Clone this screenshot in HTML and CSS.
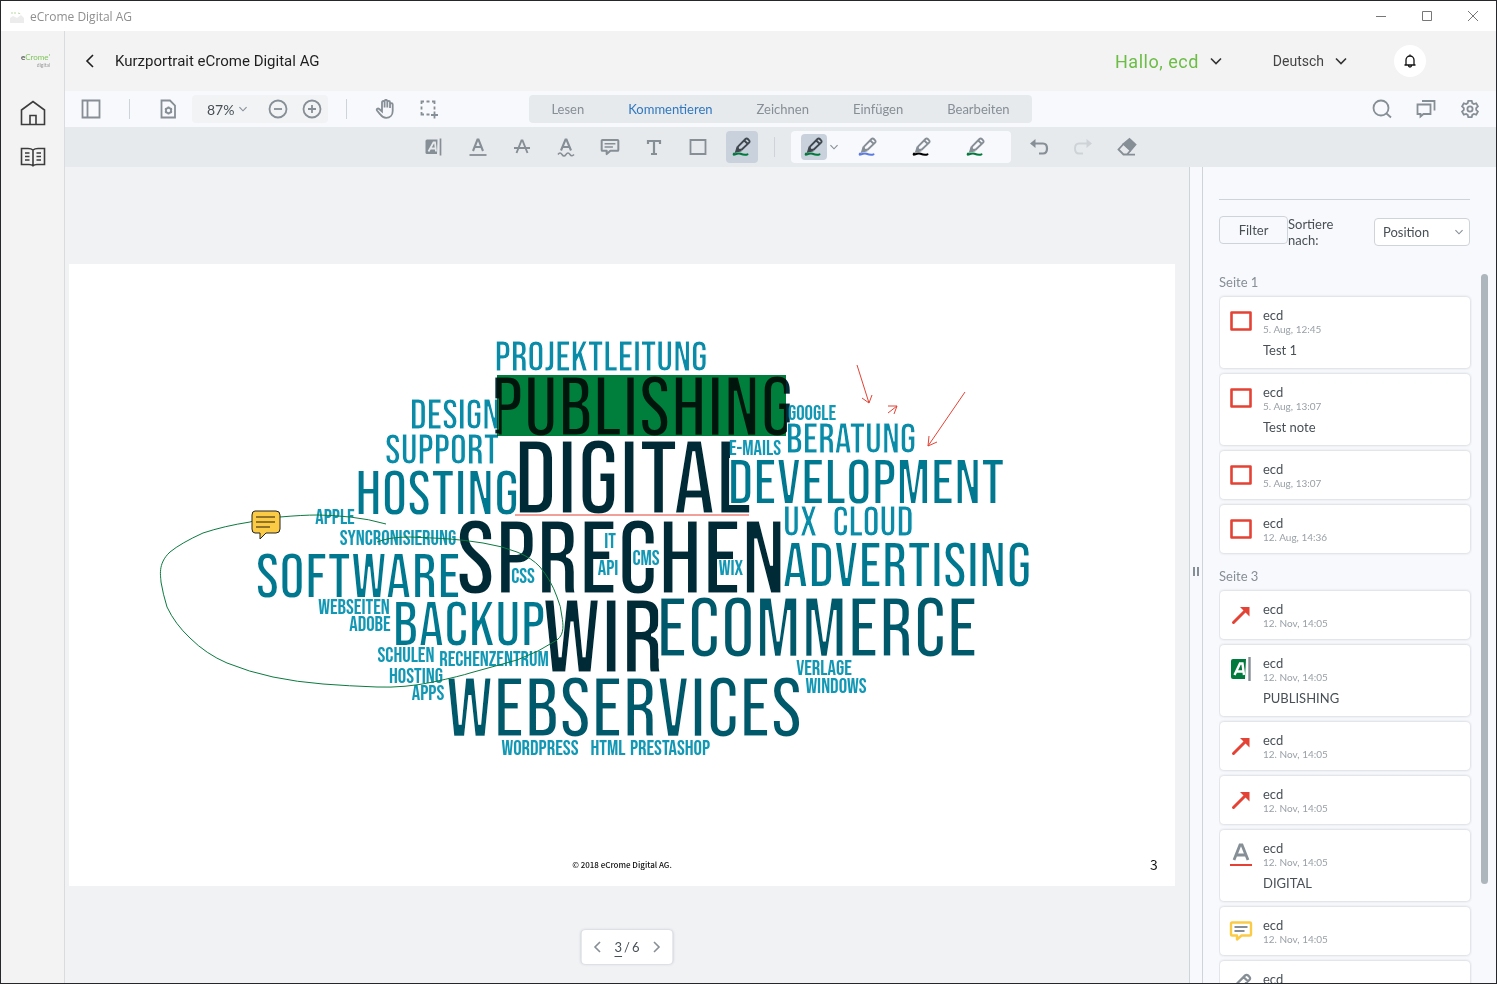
FILE: index.html
```html
<!DOCTYPE html>
<html lang="de">
<head>
    <meta charset="UTF-8">
    <meta name="viewport" content="width=device-width, initial-scale=1.0">
    <title>eCrome Digital AG</title>
    <link rel="stylesheet" href="styles.css">
</head>
<body>
    <!-- Shared icons -->
    <svg class="sprite" aria-hidden="true">
        <symbol id="i-chevron" viewBox="0 0 14 14"><path d="M2 4.500l5 5 5-5" fill="none" stroke="currentColor" stroke-width="1.600"/></symbol>
        <symbol id="i-pencil" viewBox="0 0 20 20">
            <path d="M5 13.500l1.200-4.200L13.500 2a1.600 1.600 0 0 1 2.300 0l1.300 1.300a1.600 1.600 0 0 1 0 2.300L9.800 12.500z M12.300 3.500l3.400 3.400" fill="none" stroke="currentColor" stroke-width="1.900" stroke-linejoin="round"/>
            <path d="M4 14.800l1.200-3.800 2.800 2.700z" fill="currentColor"/>
            <path class="stroke-ink" d="M2 16.600c-.6.800-.4 1.200.3 1 2.200-.8 4.200-1.600 6.200-.8s4.500 1.600 7 .6" fill="none" stroke-width="2" stroke-linecap="round"/>
        </symbol>
        <symbol id="i-rect" viewBox="0 0 24 24"><path d="M2.500 3.500h19v17h-19z" fill="none" stroke="currentColor" stroke-width="2.600" stroke-linejoin="round"/></symbol>
        <symbol id="i-arrow" viewBox="0 0 24 24"><path d="M4.500 19.500L17 7" fill="none" stroke="currentColor" stroke-width="3" stroke-linecap="round"/><path d="M11 4h9.500v9.500z" fill="currentColor"/></symbol>
        <symbol id="i-note" viewBox="0 0 24 24">
            <path d="M3 3.500h18a1 1 0 0 1 1 1v11a1 1 0 0 1-1 1h-8.500L8 20.500v-4H3a1 1 0 0 1-1-1v-11a1 1 0 0 1 1-1z" fill="none" stroke="currentColor" stroke-width="2.400" stroke-linejoin="round"/>
            <path class="note-lines" d="M5.500 8h13M5.500 12h10" fill="none" stroke-width="1.800"/>
        </symbol>
    </svg>

    <div class="window">
        <header class="titlebar">
            <svg class="app-icon" viewBox="0 0 16 14"><path d="M1 9l3-2 4 2 4-3 3 3v5H1z" fill="#ececec"/><path d="M2 4h5M9 4l3 1" stroke="#b8d9a2" stroke-dasharray="2 1"/></svg>
            <span class="window-title">eCrome Digital AG</span>
            <div class="window-buttons">
                <button aria-label="Minimieren"><svg viewBox="0 0 12 12"><path d="M1 6.500h10"/></svg></button>
                <button aria-label="Maximieren"><svg viewBox="0 0 12 12"><path d="M1.500 1.500h9v9h-9z"/></svg></button>
                <button aria-label="Schließen"><svg viewBox="0 0 12 12"><path d="M1 1l10 10M11 1L1 11"/></svg></button>
            </div>
        </header>

        <div class="app">
            <nav class="sidebar">
                <a href="#" class="logo" aria-label="eCrome digital"><span class="logo-name"><b>e</b>Crome'</span><span class="logo-sub">digital</span></a>
                <a href="#" class="side-link" aria-label="Start">
                    <svg viewBox="0 0 26 26"><path d="M1.500 10L13 1.500 24.500 10v14.500h-23zM10 24v-8.500h6V24"/></svg>
                </a>
                <a href="#" class="side-link" aria-label="Bibliothek">
                    <svg viewBox="0 0 26 26"><path d="M13 6c-1.500-1.300-3-1.500-5-1.500H1.500v16H9c2 0 3 .2 4 1.300 1-1.100 2-1.300 4-1.300h7.500v-16H18c-2 0-3.500.2-5 1.500zM13 6v15.500M5 9h4.500M5 12.500h4.500M5 16h4.500M16.500 9H21M16.500 12.500H21M16.500 16H21"/></svg>
                </a>
            </nav>

            <div class="main">
                <header class="header">
                    <button class="back" aria-label="Zurück"><svg viewBox="0 0 14 14"><path d="M10 1L4 7l6 6" fill="none" stroke="currentColor" stroke-width="1.600"/></svg></button>
                    <h1>Kurzportrait eCrome Digital AG</h1>
                    <button class="user-menu">Hallo, ecd <svg class="chevron"><use href="#i-chevron"/></svg></button>
                    <button class="lang-menu">Deutsch <svg class="chevron"><use href="#i-chevron"/></svg></button>
                    <button class="bell" aria-label="Benachrichtigungen">
                        <svg viewBox="0 0 16 16"><path d="M2.500 12h11M4 12V7a4 4 0 0 1 8 0v5M6.500 12.500a1.500 1.500 0 0 0 3 0M8 1.500V3" fill="none" stroke="currentColor" stroke-width="1.300"/></svg>
                    </button>
                </header>

                <div class="toolbar">
                    <div class="tools-left">
                        <button class="tool" aria-label="Seitenleiste"><svg viewBox="0 0 20 20"><path d="M1.500 1.500h17v17h-17zM6.500 1.500v17"/></svg></button>
                        <span class="divider"></span>
                        <button class="tool" aria-label="Ansicht"><svg viewBox="0 0 20 20"><path d="M3.500 1.500h8.500l5 5v12H3.500z"/><circle cx="10.500" cy="11.500" r="2.600"/><path d="M10.500 7.500v1.500M10.500 14v1.500M7 9.500l1.300.8M12.700 12.700l1.300.8M14 9.500l-1.300.8M8.300 12.700l-1.300.8"/></svg></button>
                        <div class="zoom">
                            <button class="zoom-value">87% <svg class="chevron-small"><use href="#i-chevron"/></svg></button>
                            <button class="tool" aria-label="Verkleinern"><svg viewBox="0 0 20 20"><circle cx="10" cy="10" r="8.500"/><path d="M6 10h8"/></svg></button>
                            <button class="tool" aria-label="Vergrößern"><svg viewBox="0 0 20 20"><circle cx="10" cy="10" r="8.500"/><path d="M6 10h8M10 6v8"/></svg></button>
                        </div>
                        <span class="divider"></span>
                        <button class="tool" aria-label="Verschieben"><svg viewBox="0 0 20 20"><path d="M7 10V3.300a1.300 1.300 0 0 1 2.600 0V8.500 2.200a1.300 1.300 0 0 1 2.700 0V8.500 3.200a1.300 1.300 0 0 1 2.700 0V9 5.500a1.300 1.300 0 0 1 2.700 0V12c0 4-2.700 6.800-6.500 6.800-3 0-4.500-1.300-6-3.500L2 11.500c-.8-1.300.8-2.700 2.200-1.500L7 12.500z"/></svg></button>
                        <button class="tool marquee" aria-label="Auswahl"><svg viewBox="0 0 20 20"><path d="M2.500 5V2.500H5M7.500 2.500h3M13 2.500h2.500V5M15.500 7.500v3M2.500 7.500v3M2.500 13v2.500H5M7.500 15.500h3M15.500 12.500v7M12 16h7"/></svg></button>
                    </div>
                    <nav class="tabs">
                        <button>Lesen</button>
                        <button class="active">Kommentieren</button>
                        <button>Zeichnen</button>
                        <button>Einfügen</button>
                        <button>Bearbeiten</button>
                    </nav>
                    <div class="tools-right">
                        <button class="tool" aria-label="Suchen"><svg viewBox="0 0 20 20"><circle cx="9" cy="9" r="7.500"/><path d="M14.500 14.500l4.500 4"/></svg></button>
                        <button class="tool" aria-label="Kommentare"><svg viewBox="0 0 20 20"><path d="M1.500 5.500h13v9.500H7.500L4.500 17.500V15h-3zM6 2h12.500v9.500"/></svg></button>
                        <button class="tool" aria-label="Einstellungen"><svg viewBox="0 0 20 20"><circle cx="10" cy="10" r="2.600"/><path d="M8.300 1.800h3.400l.6 2.300 1.500.9 2.400-.7 1.700 3-1.700 1.700v2l1.700 1.700-1.700 3-2.400-.7-1.500.9-.6 2.300H8.300l-.6-2.300-1.500-.9-2.400.7-1.700-3L3.800 11V9L2.100 7.300l1.700-3 2.400.7 1.500-.9z"/></svg></button>
                    </div>
                </div>

                <div class="toolbar-sub">
                    <div class="annotate">
                        <button class="sub" aria-label="Hervorheben"><svg viewBox="0 0 20 20"><path d="M3 2.500h10.500L13 17H3q-1.500 0-1.500-1.500V4Q1.500 2.500 3 2.500z" fill="currentColor" stroke="none"/><path class="knockout" d="M4.500 14.500L9.500 5.500h1.500l1 9M6.500 11.500h5"/><path d="M16.500 1.500v17" stroke-width="1.700"/></svg></button>
                        <button class="sub" aria-label="Unterstreichen"><svg viewBox="0 0 20 20"><path d="M5 14L9.500 2.500h1L15 14M6.800 10h6.400" stroke-width="2.100"/><path d="M1.500 18h17"/></svg></button>
                        <button class="sub" aria-label="Durchstreichen"><svg viewBox="0 0 20 20"><path d="M4.500 16L9.500 3.500h1l5 12.500M2 11h16" stroke-width="1.900"/></svg></button>
                        <button class="sub" aria-label="Wellenlinie"><svg viewBox="0 0 20 20"><path d="M5 13.500l4.500-11h1l4.500 11M6.800 10h6.400" stroke-width="2.100"/><path d="M2 17.500c1.300-2 2.700-2 4 0s2.700 2 4 0 2.700-2 4 0 2.700 1.500 4 0" stroke-width="1.500"/></svg></button>
                        <button class="sub" aria-label="Notiz"><svg><use href="#i-note"/></svg></button>
                        <button class="sub" aria-label="Text"><svg viewBox="0 0 20 20"><path d="M4 7V4h12v3M10 4v13M7 17h6" stroke-width="2.200"/></svg></button>
                        <button class="sub" aria-label="Rechteck"><svg viewBox="0 0 20 20"><path d="M2.500 3h15v14h-15z"/></svg></button>
                        <button class="sub selected ink-green" aria-label="Freihand"><svg><use href="#i-pencil"/></svg></button>
                    </div>
                    <span class="divider"></span>
                    <div class="presets">
                        <button class="preset selected ink-green" aria-label="Stift 1"><svg><use href="#i-pencil"/></svg></button>
                        <button class="preset-more" aria-label="Mehr"><svg class="chevron-small"><use href="#i-chevron"/></svg></button>
                        <button class="preset ink-blue" aria-label="Stift 2"><svg><use href="#i-pencil"/></svg></button>
                        <button class="preset ink-black" aria-label="Stift 3"><svg><use href="#i-pencil"/></svg></button>
                        <button class="preset ink-green" aria-label="Stift 4"><svg><use href="#i-pencil"/></svg></button>
                    </div>
                    <div class="history">
                        <button class="sub" aria-label="Rückgängig"><svg viewBox="0 0 20 20"><path d="M4 6.500h10q4 0 4 5t-4 5h-4" stroke-width="2.200"/><path d="M1 6.500L6.500 2v9z" fill="currentColor" stroke="none"/></svg></button>
                        <button class="sub" disabled aria-label="Wiederholen"><svg viewBox="0 0 20 20"><path d="M16 6.500H6q-4 0-4 5t4 5h4" stroke-width="2"/><path d="M19 6.500L13.500 2v9z" fill="currentColor" stroke="none"/></svg></button>
                        <button class="sub" aria-label="Radierer"><svg viewBox="0 0 20 20"><path d="M6.500 7l6-5 6 5.500-5 6z" fill="currentColor"/><path d="M6.500 7L1.500 12.500 6.500 17.500h3.500l3.500-4M8 17.600h10"/></svg></button>
                    </div>
                </div>

                <div class="workspace">
                    <main class="viewer">
                        <div class="slide">
                            <svg viewBox="0 0 1106 622" role="img" aria-label="Wortwolke">
                                <g class="cloud">
                                    <g class="xl">
                                        <text x="564" y="250">DIGITAL</text>
                                        <text x="552" y="330">SPRECHEN</text>
                                        <text x="534" y="409">WIR</text>
                                    </g>
                                    <g class="l">
                                        <text x="573" y="172" class="darkest">PUBLISHING</text>
                                        <text x="748" y="393">ECOMMERCE</text>
                                        <text x="555" y="473">WEBSERVICES</text>
                                    </g>
                                    <g class="m">
                                        <text x="368" y="251">HOSTING</text>
                                        <text x="289" y="334">SOFTWARE</text>
                                        <text x="400" y="382">BACKUP</text>
                                        <text x="797" y="240">DEVELOPMENT</text>
                                        <text x="838" y="323">ADVERTISING</text>
                                    </g>
                                    <g class="s">
                                        <text x="532" y="107">PROJEKTLEITUNG</text>
                                        <text x="386" y="165">DESIGN</text>
                                        <text x="373" y="200">SUPPORT</text>
                                        <text x="782" y="189">BERATUNG</text>
                                        <text x="731" y="272">UX</text>
                                        <text x="804" y="272">CLOUD</text>
                                    </g>
                                    <g class="xs">
                                        <text x="743" y="156">GOOGLE</text>
                                        <text x="686" y="191">E-MAILS</text>
                                        <text x="266" y="260">APPLE</text>
                                        <text x="329" y="281">SYNCRONISIERUNG</text>
                                        <text x="454" y="319">CSS</text>
                                        <text x="541" y="284">IT</text>
                                        <text x="539" y="311">API</text>
                                        <text x="577" y="301">CMS</text>
                                        <text x="662" y="311">WIX</text>
                                        <text x="285" y="350">WEBSEITEN</text>
                                        <text x="301" y="367">ADOBE</text>
                                        <text x="337" y="398">SCHULEN</text>
                                        <text x="425" y="402">RECHENZENTRUM</text>
                                        <text x="347" y="419">HOSTING</text>
                                        <text x="359" y="436">APPS</text>
                                        <text x="755" y="411">VERLAGE</text>
                                        <text x="767" y="429">WINDOWS</text>
                                        <text x="471" y="491">WORDPRESS</text>
                                        <text x="539" y="491">HTML</text>
                                        <text x="601" y="491">PRESTASHOP</text>
                                    </g>
                                </g>
                                <!-- Annotations -->
                                <path class="highlight" d="M428 111h289v61H428z"/>
                                <path class="red-line" d="M446 251h234"/>
                                <path class="red-line" d="M788 101l12 38M793 134l7 5 3-8M819 149l9-7M819 142l9 0-3 8M896 128l-37 54M860 172l-1 10 9-4"/>
                                <path class="freehand" d="M317 260Q300 255 281 253T248 251T211 253T181 258Q155 262 134 269Q112 279 101 288C88 300 92 313 92 318Q94 330 98 343Q106 360 121 374Q137 390 158 399Q180 408 204 413T254 420T308 423T364 418T401 409L448 396Q470 388 488 376C496 370 494 359 493 353Q492 342 488 333Q482 316 471 303Q463 294 448 288T414 279T381 275T341 273Q320 273 308 278"/>
                                <path class="sticky" d="M186 247h21q4 0 4 4v14q0 4-4 4h-10l-6 6v-6h-5q-3 0-3-4v-14q0-4 3-4z"/>
                                <path class="sticky-lines" d="M187 253h19M187 258h19M187 263h14"/>
                                <text class="copyright" x="553" y="604">© 2018 eCrome Digital AG.</text>
                                <text class="page-no" x="1085" y="606">3</text>
                            </svg>
                        </div>
                        <div class="pager">
                            <button aria-label="Vorherige Seite"><svg class="prev"><use href="#i-chevron"/></svg></button>
                            <span class="pages"><u>3</u><span>/</span><span>6</span></span>
                            <button aria-label="Nächste Seite"><svg class="next"><use href="#i-chevron"/></svg></button>
                        </div>
                    </main>
                    <div class="resizer"><span></span></div>
                    <aside class="panel">
                        <div class="filter-row">
                            <button class="filter">Filter</button>
                            <label for="sort">Sortiere nach:</label>
                            <div class="select-wrap">
                                <select id="sort"><option>Position</option></select>
                                <svg class="chevron-small"><use href="#i-chevron"/></svg>
                            </div>
                        </div>
                        <div class="notes">
                            <div class="note-list">
                                <h2>Seite 1</h2>
                                <article class="card"><svg class="red"><use href="#i-rect"/></svg><div><h3>ecd</h3><time>5. Aug, 12:45</time><p>Test 1</p></div></article>
                                <article class="card"><svg class="red"><use href="#i-rect"/></svg><div><h3>ecd</h3><time>5. Aug, 13:07</time><p>Test note</p></div></article>
                                <article class="card"><svg class="red"><use href="#i-rect"/></svg><div><h3>ecd</h3><time>5. Aug, 13:07</time></div></article>
                                <article class="card"><svg class="red"><use href="#i-rect"/></svg><div><h3>ecd</h3><time>12. Aug, 14:36</time></div></article>
                                <h2>Seite 3</h2>
                                <article class="card"><svg class="red"><use href="#i-arrow"/></svg><div><h3>ecd</h3><time>12. Nov, 14:05</time></div></article>
                                <article class="card"><svg viewBox="0 0 24 24"><path d="M4 2h13l-1 20H4q-2 0-2-2V4q0-2 2-2z" fill="#007a3d"/><path d="M5.500 18L11 6.500h2.500L15 18M7.500 14.500h7" fill="none" stroke="#fff" stroke-width="2.400"/><path d="M20.500 0v24" stroke="#868e96" stroke-width="2.400"/></svg><div><h3>ecd</h3><time>12. Nov, 14:05</time><p>PUBLISHING</p></div></article>
                                <article class="card"><svg class="red"><use href="#i-arrow"/></svg><div><h3>ecd</h3><time>12. Nov, 14:05</time></div></article>
                                <article class="card"><svg class="red"><use href="#i-arrow"/></svg><div><h3>ecd</h3><time>12. Nov, 14:05</time></div></article>
                                <article class="card"><svg viewBox="0 0 24 24"><path d="M5 18l6-15h2l6 15M7.500 13h9" fill="none" stroke="#868e96" stroke-width="2.800"/><path d="M1 23h22" stroke="#e44234" stroke-width="2"/></svg><div><h3>ecd</h3><time>12. Nov, 14:05</time><p>DIGITAL</p></div></article>
                                <article class="card"><svg class="yellow"><use href="#i-note"/></svg><div><h3>ecd</h3><time>12. Nov, 14:05</time></div></article>
                                <article class="card"><svg class="grey ink-green"><use href="#i-pencil"/></svg><div><h3>ecd</h3></div></article>
                            </div>
                            <div class="scrollbar"></div>
                        </div>
                    </aside>
                </div>
            </div>
        </div>
    </div>
</body>
</html>
```
FILE: styles.css
```css
/* Basic Reset */
* {
    margin: 0;
    padding: 0;
    box-sizing: border-box;
}

:root {
    --icon: #868e96;
    --text: #485056;
    --bar: #f8f9fc;
    --bar-sub: #e6eaed;
    --line: #cfd4da;
    --red: #e44234;
    --green: #007a3d;
}

body {
    font-family: Lato, sans-serif;
    font-size: 13px;
    color: var(--text);
    overflow: hidden;
}

button {
    font: inherit;
    color: inherit;
    background: none;
    border: none;
    cursor: pointer;
}

a {
    color: inherit;
    text-decoration: none;
}

svg {
    display: block;
}

.sprite {
    display: none;
}

.window {
    height: 100vh;
    display: flex;
    flex-direction: column;
    border: 1px solid #26272b;
    background: #f3f3f3;
}

/* Title bar */
.titlebar {
    height: 30px;
    flex: none;
    display: flex;
    align-items: center;
    padding: 0 17px 0 8px;
    background: #fff;
    color: #8f8f8f;
    font-family: "Open Sans", sans-serif;
    font-size: 12px;
}

.app-icon {
    width: 16px;
    height: 14px;
    margin-right: 5px;
}

.window-title {
    flex: 1;
}

.window-buttons {
    display: flex;
    gap: 34px;
}

.window-buttons svg {
    width: 12px;
    height: 12px;
    fill: none;
    stroke: #777;
}

.app {
    flex: 1;
    min-height: 0;
    display: flex;
}

/* Sidebar */
.sidebar {
    width: 64px;
    flex: none;
    display: flex;
    flex-direction: column;
    align-items: center;
    gap: 18px;
    padding-top: 22px;
    border-right: 1px solid #d9dbde;
}

.logo {
    display: flex;
    flex-direction: column;
    font-size: 8px;
    line-height: 9px;
    color: #7fc45c;
    margin: 0 0 14px 6px;
}

.logo b {
    color: #555;
}

.logo-sub {
    font-size: 5px;
    line-height: 6px;
    color: #999;
    text-align: right;
}

.side-link svg {
    width: 26px;
    height: 26px;
    fill: none;
    stroke: #3c3c3c;
    stroke-width: 1.6;
}

.main {
    flex: 1;
    min-width: 0;
    display: flex;
    flex-direction: column;
}

/* Header */
.header {
    height: 60px;
    flex: none;
    display: flex;
    align-items: center;
    padding: 0 70px 0 18px;
    font-family: Roboto, sans-serif;
    color: #1f1f1f;
}

.back svg {
    width: 14px;
    height: 16px;
}

.header h1 {
    flex: 1;
    margin-left: 18px;
    font-size: 15px;
    font-weight: 400;
}

.user-menu,
.lang-menu {
    display: flex;
    align-items: center;
    gap: 10px;
}

.user-menu {
    font-size: 18px;
    color: #6cbd45;
    letter-spacing: 0.5px;
}

.lang-menu {
    margin: 0 46px 0 50px;
    font-size: 14px;
    color: #444;
}

.chevron {
    width: 14px;
    height: 14px;
    color: #333;
}

.chevron-small {
    width: 10px;
    height: 10px;
    color: var(--icon);
}

.bell {
    width: 32px;
    height: 32px;
    border-radius: 50%;
    background: #fff;
    color: #111;
}

.bell svg {
    width: 16px;
    height: 16px;
    margin: 0 auto;
}

/* Toolbars */
.toolbar {
    height: 36px;
    flex: none;
    display: grid;
    grid-template-columns: 1fr auto 1fr;
    align-items: center;
    padding: 0 16px;
    background: var(--bar);
}

.tools-left,
.tools-right {
    display: flex;
    align-items: center;
}

.tools-right {
    justify-content: flex-end;
    gap: 24px;
}

.tool,
.sub,
.preset {
    color: var(--icon);
}

.tool svg,
.sub svg,
.preset svg {
    width: 20px;
    height: 20px;
    margin: 0 auto;
    fill: none;
    stroke: currentColor;
    stroke-width: 1.8;
}

.divider {
    width: 1px;
    height: 20px;
    background: var(--line);
}

.tools-left .divider {
    margin: 0 28px;
}

.zoom {
    display: flex;
    align-items: center;
    gap: 14px;
    height: 28px;
    margin-left: 14px;
    padding: 0 6px 0 15px;
    border-radius: 4px;
    background: #f1f3f5;
}

.tools-left .zoom + .divider {
    margin-left: 18px;
}

.zoom-value {
    display: flex;
    align-items: center;
    gap: 4px;
    margin-right: 6px;
    font-size: 14px;
}

.marquee {
    margin-left: 24px;
}

.tabs {
    display: flex;
    height: 28px;
    border-radius: 4px;
    background: var(--bar-sub);
    color: var(--icon);
}

.tabs button {
    padding: 0 20px;
    margin: 0 2px;
}

.tabs .active {
    color: #3178c0;
}

.toolbar-sub {
    height: 40px;
    flex: none;
    display: flex;
    align-items: center;
    justify-content: center;
    gap: 16px;
    background: var(--bar-sub);
}

.annotate,
.history {
    display: flex;
    gap: 12px;
}

.sub {
    width: 32px;
    height: 32px;
    border-radius: 4px;
}

.sub:disabled {
    color: #ced3d8;
}

.knockout {
    stroke: var(--bar-sub);
}

.selected {
    background: #c8d1dc;
    color: #40474e;
}

.note-lines {
    stroke: var(--icon);
}

.presets {
    display: flex;
    align-items: center;
    height: 32px;
    padding: 0 22px 0 10px;
    border-radius: 4px;
    background: var(--bar);
}

.presets + .history {
    margin-left: -4px;
}

.preset {
    width: 26px;
    height: 26px;
    border-radius: 4px;
}

.preset + .preset {
    margin-left: 28px;
}

.preset-more {
    padding: 0 16px 0 2px;
}

.ink-green { --ink: var(--green); }
.ink-blue { --ink: #5c7be0; }
.ink-black { --ink: #000; }

.stroke-ink {
    stroke: var(--ink);
}

/* Document */
.workspace {
    flex: 1;
    min-height: 0;
    display: flex;
}

.viewer {
    flex: 1;
    min-width: 0;
    position: relative;
    display: flex;
    align-items: center;
    padding: 0 14px 0 4px;
    background: #f1f2f4;
}

.slide {
    flex: 1;
    background: #fff;
}

/* White outline keeps the heavy display face light */
.cloud {
    font-family: "Bebas Neue", "Roboto Condensed", "Liberation Sans Narrow", sans-serif;
    text-anchor: middle;
    stroke: #fff;
}

.xl { font-size: 106px; fill: #002b36; stroke-width: 3px; }
.l { font-size: 86px; fill: #00586b; stroke-width: 3px; }
.m { font-size: 64px; fill: #007890; stroke-width: 2px; }
.s { font-size: 42px; fill: #0a8ba8; stroke-width: 1px; }
.xs { font-size: 21px; fill: #1298b5; stroke: none; }
.darkest { fill: #002b36; }

.highlight {
    fill: #007f3c;
    mix-blend-mode: multiply;
}

.red-line {
    fill: none;
    stroke: var(--red);
}

.freehand {
    fill: none;
    stroke: #0b7a3f;
}

.sticky {
    fill: #fccb45;
    stroke: #222;
}

.sticky-lines {
    stroke: #6d5520;
    stroke-width: 1.4;
}

.copyright,
.page-no {
    font-family: "Noto Sans CJK SC", "Noto Sans", sans-serif;
    fill: #111;
    text-anchor: middle;
}

.copyright {
    font-size: 8px;
    font-weight: 500;
}

.page-no {
    font-size: 14px;
}

.pager {
    position: absolute;
    bottom: 19px;
    left: 50%;
    transform: translateX(-50%);
    display: flex;
    align-items: center;
    gap: 10px;
    height: 34px;
    padding: 0 9px;
    border-radius: 4px;
    background: #fff;
    box-shadow: 0 0 3px #bcc2c8;
    font-size: 13px;
}

.pages {
    display: flex;
    gap: 2px;
}

.pages u {
    text-underline-offset: 4px;
}

.pager svg {
    width: 14px;
    height: 14px;
    color: var(--icon);
}

.prev { transform: rotate(90deg); }
.next { transform: rotate(-90deg); }

.resizer {
    width: 14px;
    flex: none;
    display: flex;
    align-items: center;
    justify-content: center;
    padding-bottom: 8px;
    border: solid var(--line);
    border-width: 0 1px;
    background: var(--bar);
}

.resizer span {
    width: 6px;
    height: 9px;
    border: solid var(--icon);
    border-width: 0 2px;
}

/* Comment panel */
.panel {
    width: 293px;
    flex: none;
    display: flex;
    flex-direction: column;
    padding: 32px 8px 0 16px;
    background: var(--bar);
}

.filter-row {
    display: flex;
    align-items: flex-start;
    height: 75px;
    margin-right: 18px;
    padding-top: 16px;
    border-top: 1px solid var(--line);
    line-height: 16px;
}

.filter {
    width: 69px;
    height: 28px;
    border: 1px solid var(--line);
    border-radius: 4px;
}

.filter-row label {
    width: 60px;
}

.select-wrap {
    position: relative;
    width: 96px;
    margin: 2px 0 0 auto;
}

.select-wrap select {
    width: 100%;
    height: 28px;
    padding-left: 8px;
    appearance: none;
    font: inherit;
    color: inherit;
    background: #fff;
    border: 1px solid var(--line);
    border-radius: 4px;
}

.select-wrap svg {
    position: absolute;
    right: 6px;
    top: 9px;
    pointer-events: none;
}

.notes {
    flex: 1;
    min-height: 0;
    display: flex;
    justify-content: space-between;
}

.note-list {
    flex: 1;
    margin-right: 9px;
    padding-right: 1px;
    overflow: hidden;
}

.note-list h2 {
    font-size: 13px;
    font-weight: 400;
    line-height: 16px;
    color: var(--icon);
    margin-bottom: 7px;
}

.card + h2 {
    margin-top: 15px;
}

.card {
    display: flex;
    gap: 10px;
    min-height: 48px;
    margin: 0 1px 6px;
    padding: 10px 9px;
    border-radius: 4px;
    background: #fff;
    box-shadow: 0 0 3px #bcc2c8;
}

.card svg {
    width: 24px;
    height: 24px;
    margin-top: 2px;
}

.card h3 {
    font-size: 13px;
    font-weight: 400;
    line-height: 16px;
}

.card time {
    display: block;
    font-size: 10px;
    line-height: 12px;
    color: #99a0a6;
}

.card p {
    margin-top: 7px;
    line-height: 16px;
}

.red { color: var(--red); }
.yellow { color: #fccb45; }
.grey { color: var(--icon); }

.scrollbar {
    width: 7px;
    height: 86%;
    border-radius: 4px;
    background: #adb5bd;
}
```
